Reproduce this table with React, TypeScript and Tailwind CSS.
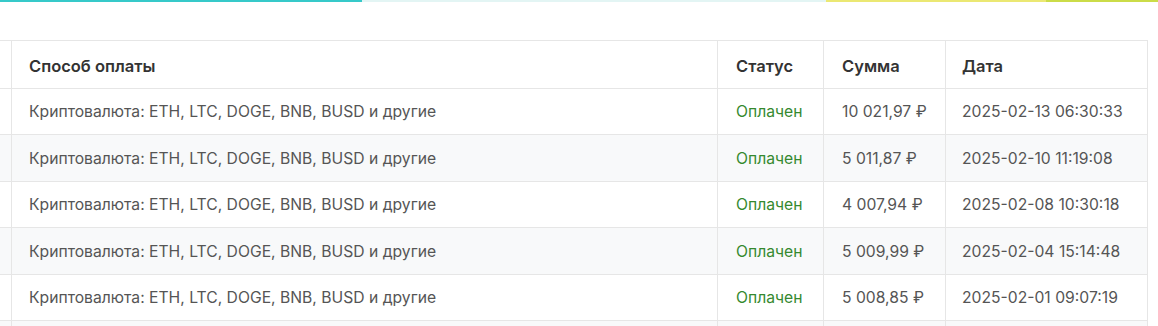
const rows = [
  { sum: "10 021,97 ₽", date: "2025-02-13 06:30:33" },
  { sum: "5 011,87 ₽", date: "2025-02-10 11:19:08" },
  { sum: "4 007,94 ₽", date: "2025-02-08 10:30:18" },
  { sum: "5 009,99 ₽", date: "2025-02-04 15:14:48" },
  { sum: "5 008,85 ₽", date: "2025-02-01 09:07:19" },
  { sum: "", date: "" },
];

const grid = "grid grid-cols-[11px_706px_106px_122px_203px]";
const head = "flex items-center pt-[3px] border-l border-[#e6e6e6]";
const cell = "flex items-center pt-[1px] border-l border-[#e6e6e6]";

export default function App() {
  return (
    <div className="w-[1158px] h-[326px] overflow-hidden bg-white font-['Inter',sans-serif]">
      <div className="flex h-[2px]">
        <div className="w-[362px] bg-[#36c9c9]" />
        <div className="w-[464px] bg-[#e3f5f4]" />
        <div className="w-[220px] bg-[#ebe873]" />
        <div className="flex-1 bg-[#cbdc48]" />
      </div>
      <div className="mt-[38px] w-[1148px] border-t border-[#e6e6e6]">
        <div className={`${grid} h-[48px] border-b border-[#e6e6e6] text-[16.5px] font-semibold text-[#333]`}>
          <div />
          <div className={`${head} px-[17px]`}>Способ оплаты</div>
          <div className={`${head} px-[18px]`}>Статус</div>
          <div className={`${head} px-[18px]`}>Сумма</div>
          <div className={`${head} border-r px-[16px]`}>Дата</div>
        </div>
        {rows.map((r, i) => (
          <div
            key={i}
            className={`${grid} h-[46.4px] border-b border-[#e6e6e6] text-[15.7px] text-[#555] ${
              i % 2 === 1 ? "bg-[#f8f9fa]" : "bg-white"
            }`}
          >
            <div />
            <div className={`${cell} px-[17px]`}>
              {r.date && "Криптовалюта: ETH, LTC, DOGE, BNB, BUSD и другие"}
            </div>
            <div className={`${cell} px-[18px] text-[#35892f]`}>{r.date && "Оплачен"}</div>
            <div className={`${cell} px-[18px]`}>{r.sum}</div>
            <div className={`${cell} border-r px-[16px]`}>{r.date}</div>
          </div>
        ))}
      </div>
    </div>
  );
}
